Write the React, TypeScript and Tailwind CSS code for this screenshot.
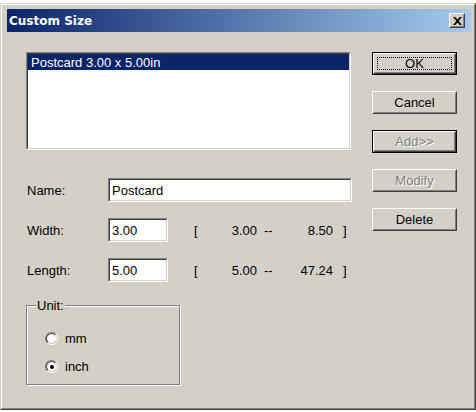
import type { ReactNode } from 'react';

function Sunken({ className = '', children }: { className?: string; children?: ReactNode }) {
  return (
    <div className={`border border-t-[#808080] border-l-[#808080] border-r-white border-b-white ${className}`}>
      <div className="h-full w-full border border-t-[#404040] border-l-[#404040] border-r-[#d4d0c8] border-b-[#d4d0c8] bg-white">
        {children}
      </div>
    </div>
  );
}

function Button({
  label,
  isDefault = false,
  disabled = false,
  focused = false,
}: {
  label: string;
  isDefault?: boolean;
  disabled?: boolean;
  focused?: boolean;
}) {
  const inner = (
    <div className="h-full w-full border border-t-white border-l-white border-r-[#404040] border-b-[#404040]">
      <div className="relative flex h-full w-full items-center justify-center border border-t-[#d4d0c8] border-l-[#d4d0c8] border-r-[#808080] border-b-[#808080]">
        {focused && <div className="absolute inset-[2px] border border-dotted border-black" />}
        <span className={disabled ? 'text-[#808080] [text-shadow:1px_1px_0_#fff]' : 'text-black'}>{label}</span>
      </div>
    </div>
  );
  return (
    <div className={`h-[23px] w-[85px] ${isDefault ? 'border border-black' : ''}`}>{inner}</div>
  );
}

function Radio({ label, checked = false }: { label: string; checked?: boolean }) {
  return (
    <div className="flex h-[13px] items-center gap-[7px]">
      <div className="h-[13px] w-[13px] rounded-full border border-t-[#808080] border-l-[#808080] border-r-white border-b-white">
        <div className="flex h-full w-full items-center justify-center rounded-full border border-t-[#404040] border-l-[#404040] border-r-[#d4d0c8] border-b-[#d4d0c8] bg-white">
          {checked && <div className="h-[4px] w-[4px] rounded-full bg-black" />}
        </div>
      </div>
      <span>{label}</span>
    </div>
  );
}

function RangeRow({ label, value, min, max }: { label: string; value: string; min: string; max: string }) {
  return (
    <div className="flex h-[24px] items-center whitespace-nowrap">
      <span className="w-[82px] pl-[1px]">{label}</span>
      <Sunken className="h-[24px] w-[60px]">
        <div className="flex h-full items-center px-[2px]">{value}</div>
      </Sunken>
      <span className="ml-[26px] w-[33px]">[</span>
      <span className="w-[30px] text-right">{min}</span>
      <span className="ml-[7px] w-[10px]">--</span>
      <span className="w-[59px] text-right">{max}</span>
      <span className="ml-[10px]">]</span>
    </div>
  );
}

export default function App() {
  return (
    <div className="h-[412px] w-[476px] bg-white pt-[3px] font-['Liberation_Sans',Arial,sans-serif] text-[13px] leading-none text-black">
      <div className="h-[407px] border border-t-[#d4d0c8] border-l-[#d4d0c8] border-r-[#404040] border-b-[#404040] bg-[#d4d0c8]">
        <div className="h-full border border-t-white border-l-white border-r-[#808080] border-b-[#808080] pl-[5px] pr-[3px] pt-[4px]">
          {/* title bar */}
          <div className="flex h-[23px] items-center justify-between bg-[linear-gradient(90deg,#0a246a,#a6caf0)]">
            <span className="pl-[2px] font-['DejaVu_Sans',Verdana,sans-serif] text-[12px] font-bold text-white">
              Custom Size
            </span>
            <div className="mr-[6px] h-[15px] w-[16px] border border-t-white border-l-white border-r-[#404040] border-b-[#404040] bg-[#d4d0c8]">
              <div className="flex h-full w-full items-center justify-center border border-t-[#d4d0c8] border-l-[#d4d0c8] border-r-[#808080] border-b-[#808080]">
                <svg width="9" height="8" viewBox="0 0 9 8">
                  <path d="M0 0h2.2l2.3 2.6L6.8 0H9L5.6 4 9 8H6.8L4.5 5.4 2.2 8H0l3.4-4z" fill="#000" />
                </svg>
              </div>
            </div>
          </div>

          <div className="flex pl-[19px] pt-[20px]">
            <div className="flex w-[326px] flex-col">
              <Sunken className="h-[98px] w-[325px]">
                <div className="flex h-[16px] items-center bg-[#0a246a] pl-[3px] text-white">Postcard 3.00 x 5.00in</div>
              </Sunken>

              <div className="mt-[28px] flex flex-col gap-[16px]">
                <div className="flex h-[24px] items-center">
                  <span className="w-[82px] pl-[1px]">Name:</span>
                  <Sunken className="h-[24px] w-[244px]">
                    <div className="flex h-full items-center px-[2px]">Postcard</div>
                  </Sunken>
                </div>
                <RangeRow label="Width:" value="3.00" min="3.00" max="8.50" />
                <RangeRow label="Length:" value="5.00" min="5.00" max="47.24" />
              </div>

              <div className="relative mt-[23px] h-[80px] w-[154px] border border-[#808080] shadow-[1px_1px_0_#fff,inset_1px_1px_0_#fff]">
                <span className="absolute -top-[7px] left-[9px] bg-[#d4d0c8] px-[1px]">Unit:</span>
                <div className="flex flex-col gap-[15px] pl-[18px] pt-[26px]">
                  <Radio label="mm" />
                  <Radio label="inch" checked />
                </div>
              </div>
            </div>

            <div className="ml-[20px] flex flex-col gap-[16px]">
              <Button label="OK" isDefault focused />
              <Button label="Cancel" />
              <Button label="Add>>" isDefault disabled />
              <Button label="Modify" disabled />
              <Button label="Delete" />
            </div>
          </div>
        </div>
      </div>
    </div>
  );
}
